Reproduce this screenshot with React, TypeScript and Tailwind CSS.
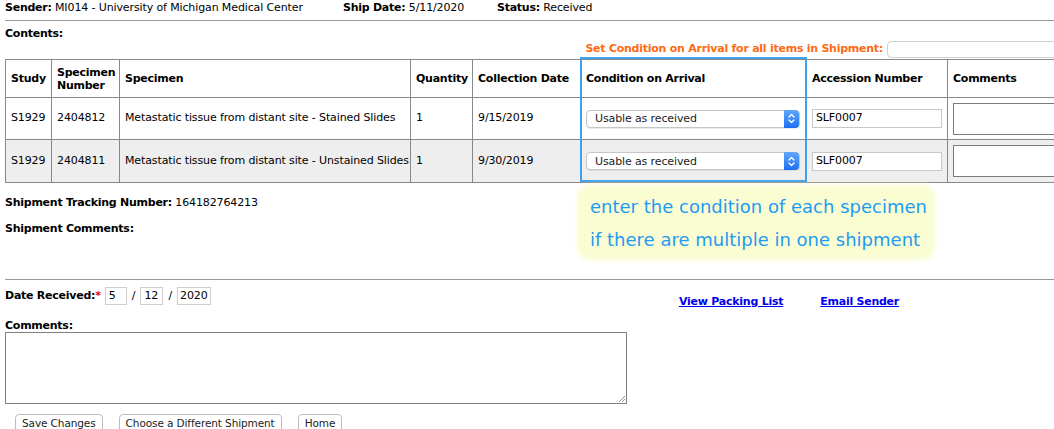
import React from 'react';

type Row = {
  study: string;
  number: string;
  specimen: string;
  qty: string;
  date: string;
  accession: string;
  shaded?: boolean;
};

const rows: Row[] = [
  {
    study: 'S1929',
    number: '2404812',
    specimen: 'Metastatic tissue from distant site - Stained Slides',
    qty: '1',
    date: '9/15/2019',
    accession: 'SLF0007',
  },
  {
    study: 'S1929',
    number: '2404811',
    specimen: 'Metastatic tissue from distant site - Unstained Slides',
    qty: '1',
    date: '9/30/2019',
    accession: 'SLF0007',
    shaded: true,
  },
];

function FakeSelect({ value }: { value: string }) {
  return (
    <div className="flex h-[18px] w-[214px] items-center rounded-[4px] border border-[#c6c6c6] bg-white shadow-[0_1px_1px_rgba(0,0,0,0.08)]">
      <span className="flex-1 pl-[8px] text-[11px] leading-none text-[#222]">{value}</span>
      <span className="flex h-[18px] w-[15px] items-center justify-center rounded-r-[4px] bg-gradient-to-b from-[#5fa8fb] to-[#1d6ef0]">
        <svg width="7" height="11" viewBox="0 0 7 11" fill="none" stroke="white" strokeWidth="1.3" strokeLinecap="round" strokeLinejoin="round">
          <path d="M1 4 L3.5 1.5 L6 4" />
          <path d="M1 7 L3.5 9.5 L6 7" />
        </svg>
      </span>
    </div>
  );
}

export default function App() {
  const th = 'border border-[#888] px-[5px] text-left align-middle font-bold leading-[13px] tracking-[-0.25px]';
  const td = 'border border-[#888] px-[5px] align-middle';

  return (
    <div className="relative h-[429px] w-[1054px] overflow-hidden bg-white pl-[5px] font-['DejaVu_Sans',Verdana,sans-serif] text-[11px] tracking-[-0.12px] text-black">
      {/* shipment header */}
      <div className="flex h-[16px] items-center">
        <div className="w-[338px]">
          <b className="tracking-[-0.25px]">Sender:</b> MI014 - University of Michigan Medical Center
        </div>
        <div className="w-[154px]">
          <b className="tracking-[-0.25px]">Ship Date:</b> 5/11/2020
        </div>
        <div>
          <b className="tracking-[-0.25px]">Status:</b> Received
        </div>
      </div>
      <div className="mt-[4px] h-px bg-[#999]" />

      <div className="mt-[6px] h-[14px] font-bold leading-[14px] tracking-[-0.25px]">Contents:</div>

      <div className="flex h-[17px] items-center justify-end">
        <span className="mr-[4px] font-bold tracking-[-0.25px] text-[#ff6a13]">
          Set Condition on Arrival for all items in Shipment:
        </span>
        <div className="h-[17px] w-[167px] rounded-l-[5px] border border-r-0 border-[#cfcfcf] bg-white" />
      </div>

      {/* contents table */}
      <table className="mt-px w-[1140px] table-fixed border-collapse">
        <colgroup>
          <col className="w-[46px]" />
          <col className="w-[68px]" />
          <col className="w-[291px]" />
          <col className="w-[62px]" />
          <col className="w-[108px]" />
          <col className="w-[226px]" />
          <col className="w-[141px]" />
          <col className="w-[198px]" />
        </colgroup>
        <thead>
          <tr className="h-[38px]">
            <th className={th}>Study</th>
            <th className={th}>
              Specimen
              <br />
              Number
            </th>
            <th className={th}>Specimen</th>
            <th className={th}>Quantity</th>
            <th className={th}>Collection Date</th>
            <th className={th}>Condition on Arrival</th>
            <th className={th}>Accession Number</th>
            <th className={th}>Comments</th>
          </tr>
        </thead>
        <tbody>
          {rows.map(r => (
            <tr key={r.number} className={r.shaded ? 'h-[43px] bg-[#eeeeee]' : 'h-[42px] bg-white'}>
              <td className={td}>{r.study}</td>
              <td className={td}>{r.number}</td>
              <td className={td + ' whitespace-nowrap'}>{r.specimen}</td>
              <td className={td}>{r.qty}</td>
              <td className={td}>{r.date}</td>
              <td className={td}>
                <FakeSelect value="Usable as received" />
              </td>
              <td className={td}>
                <div className="flex h-[19px] w-[130px] items-center border border-[#c8c8c8] bg-white pl-[3px]">
                  {r.accession}
                </div>
              </td>
              <td className={td}>
                <div className="h-[32px] w-[180px] border border-[#7c7c7c] bg-white" />
              </td>
            </tr>
          ))}
        </tbody>
      </table>

      <div className="mt-[13px] h-[14px] leading-[14px]">
        <b className="tracking-[-0.25px]">Shipment Tracking Number:</b> 164182764213
      </div>
      <div className="mt-[12px] h-[14px] font-bold leading-[14px] tracking-[-0.25px]">Shipment Comments:</div>

      <div className="mt-[43px] h-px bg-[#999]" />

      {/* date received + links */}
      <div className="mt-[7px] flex h-[18px] items-center">
        <b className="tracking-[-0.25px]">Date Received:</b>
        <span className="mr-[4px] font-bold text-[#e00]">*</span>
        <div className="flex h-[18px] w-[22px] items-center border border-[#cfcfcf] pl-[3px]">5</div>
        <span className="mx-[5px]">/</span>
        <div className="flex h-[18px] w-[23px] items-center border border-[#cfcfcf] pl-[3px]">12</div>
        <span className="mx-[5px]">/</span>
        <div className="flex h-[18px] w-[34px] items-center border border-[#cfcfcf] pl-[2px]">2020</div>
        <a href="#" className="ml-[468px] mt-[12px] font-bold tracking-[-0.25px] text-[#0000ee] underline">
          View Packing List
        </a>
        <a href="#" className="ml-[37px] mt-[12px] font-bold tracking-[-0.25px] text-[#0000ee] underline">
          Email Sender
        </a>
      </div>

      <div className="mt-[14px] h-[13px] font-bold leading-[13px] tracking-[-0.25px]">Comments:</div>
      <div className="relative h-[72px] w-[622px] border border-[#808080] bg-white">
        <svg className="absolute bottom-[1px] right-[1px]" width="7" height="7" viewBox="0 0 7 7" stroke="#777" strokeWidth="0.8">
          <path d="M1 7 L7 1 M4 7 L7 4" />
        </svg>
      </div>

      <div className="mt-[10px] flex gap-[16px] pl-[10px]">
        {['Save Changes', 'Choose a Different Shipment', 'Home'].map(label => (
          <button
            key={label}
            className="h-[19px] rounded-[4px] border border-[#bdbdbd] bg-white px-[6px] text-[10.5px] leading-none tracking-[-0.1px] text-[#222]"
          >
            {label}
          </button>
        ))}
      </div>

      {/* annotation overlays */}
      <div className="pointer-events-none absolute left-[580px] top-[57px] h-[125px] w-[227px] border-2 border-[#3da2ea]" />
      <div className="pointer-events-none absolute left-[580px] top-[188px] flex h-[69px] w-[352px] flex-col justify-center rounded-[10px] bg-[#fafdd2] pl-[10px] text-[18px] leading-[33px] tracking-normal text-[#1e9bf2] shadow-[0_0_5px_3px_#fafdd2]">
        <span>enter the condition of each specimen</span>
        <span>if there are multiple in one shipment</span>
      </div>
    </div>
  );
}
